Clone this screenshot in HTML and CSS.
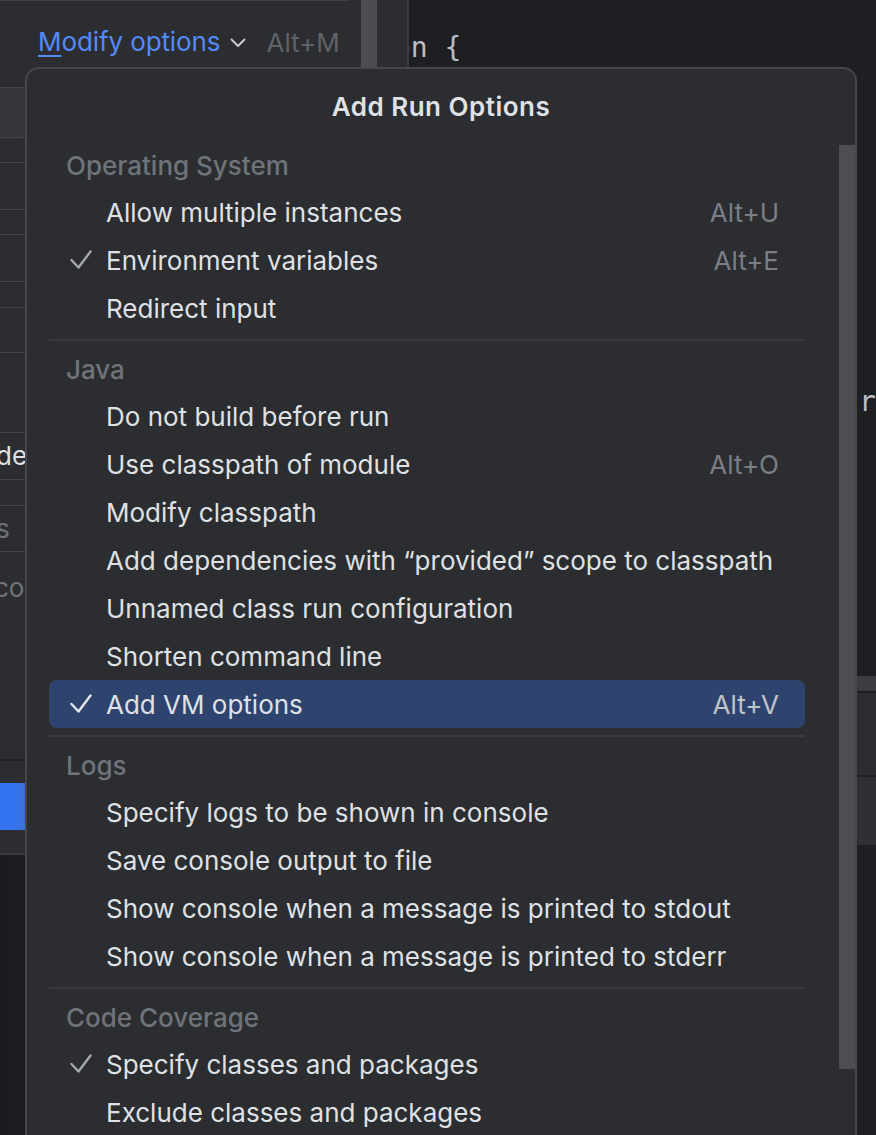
FILE: index.html
```html
<!DOCTYPE html>
<html lang="en">
<head>
<meta charset="utf-8">
<title>Add Run Options</title>
<link rel="stylesheet" href="styles.css">
</head>
<body>
<div class="screen">
  <div class="left-panel">
    <div class="left-content">
      <div class="top-rule"></div>
      <div class="modify-row">
        <span class="link"><span class="mn">M</span>odify options</span>
        <svg class="chev" width="16" height="10" viewBox="0 0 16 10"><polyline points="1.5,1.5 8,8 14.5,1.5" fill="none" stroke="#ced0d6" stroke-width="1.8" stroke-linecap="round" stroke-linejoin="round"/></svg>
        <span class="link-key">Alt+M</span>
      </div>
      <div class="fields">
        <div class="field hi first h49"></div>
        <div class="field h24"></div>
        <div class="field h46"></div>
        <div class="field h24"></div>
        <div class="field h46"></div>
        <div class="field h25"></div>
        <div class="field h44"></div>
        <div class="field h79"></div>
        <div class="field h46 txt">des</div>
        <div class="field h25"></div>
        <div class="field h45 txt muted">s</div>
        <div class="field plain h207"><span class="col">col</span></div>
        <div class="dark-line"></div>
        <div class="pad h22"></div>
        <div class="blue-btn"></div>
        <div class="pad h23 bottom-rule"></div>
        <div class="below"></div>
      </div>
    </div>
    <div class="left-scroll"><div class="left-thumb"></div></div>
  </div>

  <div class="editor">
    <div class="code">
      <div class="code-line first-line">on {</div>
      <div class="code-line second-line">r</div>
    </div>
    <div class="tool-band"></div>
    <div class="tool-line"></div>
    <div class="tool-panel a"></div>
    <div class="tool-line"></div>
    <div class="tool-panel b"></div>
    <div class="editor-rest"></div>
  </div>

  <div class="popup">
    <div class="popup-title">Add Run Options</div>
    <div class="popup-body">
      <div class="list">
        <div class="group">Operating System</div>
        <div class="item"><span class="chk"></span><span class="label">Allow multiple instances</span><span class="key">Alt+U</span></div>
        <div class="item"><span class="chk"><svg width="22" height="20" viewBox="0 0 22 20"><polyline points="1.5,10 8.5,17.5 20.5,1.5" fill="none" stroke="#a4a7ad" stroke-width="2.4" stroke-linecap="round" stroke-linejoin="round"/></svg></span><span class="label">Environment variables</span><span class="key">Alt+E</span></div>
        <div class="item"><span class="chk"></span><span class="label">Redirect input</span></div>
        <div class="sep"></div>
        <div class="group">Java</div>
        <div class="item"><span class="chk"></span><span class="label">Do not build before run</span></div>
        <div class="item"><span class="chk"></span><span class="label">Use classpath of module</span><span class="key">Alt+O</span></div>
        <div class="item"><span class="chk"></span><span class="label">Modify classpath</span></div>
        <div class="item"><span class="chk"></span><span class="label">Add dependencies with “provided” scope to classpath</span></div>
        <div class="item"><span class="chk"></span><span class="label">Unnamed class run configuration</span></div>
        <div class="item"><span class="chk"></span><span class="label">Shorten command line</span></div>
        <div class="item selected"><span class="chk"><svg width="22" height="20" viewBox="0 0 22 20"><polyline points="1.5,10 8.5,17.5 20.5,1.5" fill="none" stroke="#e6e8ec" stroke-width="2.4" stroke-linecap="round" stroke-linejoin="round"/></svg></span><span class="label">Add VM options</span><span class="key">Alt+V</span></div>
        <div class="sep"></div>
        <div class="group">Logs</div>
        <div class="item"><span class="chk"></span><span class="label">Specify logs to be shown in console</span></div>
        <div class="item"><span class="chk"></span><span class="label">Save console output to file</span></div>
        <div class="item"><span class="chk"></span><span class="label">Show console when a message is printed to stdout</span></div>
        <div class="item"><span class="chk"></span><span class="label">Show console when a message is printed to stderr</span></div>
        <div class="sep"></div>
        <div class="group">Code Coverage</div>
        <div class="item"><span class="chk"><svg width="22" height="20" viewBox="0 0 22 20"><polyline points="1.5,10 8.5,17.5 20.5,1.5" fill="none" stroke="#a4a7ad" stroke-width="2.4" stroke-linecap="round" stroke-linejoin="round"/></svg></span><span class="label">Specify classes and packages</span></div>
        <div class="item"><span class="chk"></span><span class="label">Exclude classes and packages</span></div>
      </div>
      <div class="popup-scroll"></div>
    </div>
  </div>
</div>
</body>
</html>
```

FILE: styles.css
```css
* { box-sizing: border-box; }

html, body {
  margin: 0;
  padding: 0;
  background: #1e1f22;
}

body {
  font-family: Inter, "Noto Sans", sans-serif;
  font-size: 26px;
  color: #dfe1e5;
  overflow: hidden;
}

.screen {
  position: relative;
  display: flex;
  width: 876px;
  height: 1135px;
  overflow: hidden;
}

/* ---------- left dialog panel ---------- */
.left-panel {
  display: flex;
  width: 409px;
  flex-shrink: 0;
  background: #2b2d30;
  border-right: 2px solid #393b40;
}

.left-content {
  width: 361px;
  display: flex;
  flex-direction: column;
}

.top-rule {
  width: 350px;
  height: 1px;
  background: #3e4045;
}

.modify-row {
  height: 86px;
  display: flex;
  align-items: center;
  padding: 0 0 4px 38px;
  white-space: nowrap;
}

.link {
  color: #548af7;
  line-height: 36px;
  letter-spacing: -0.1px;
}

.mn {
  text-decoration: underline;
  text-decoration-thickness: 2px;
  text-underline-offset: 4px;
}

.chev {
  margin-left: 10px;
  margin-top: 2px;
  flex-shrink: 0;
}

.link-key {
  margin-left: 20px;
  color: #5f6268;
}

.fields {
  flex: 1;
  display: flex;
  flex-direction: column;
}

.field {
  border-bottom: 1px solid #43454a;
  font-size: 26px;
  line-height: 46px;
  white-space: nowrap;
  overflow: hidden;
}

.field.first { border-top: 1px solid #43454a; }
.field.hi { background: linear-gradient(90deg, #33353a, #393b40); }
.field.plain { border-bottom: none; }

.field.txt { text-indent: -4px; color: #dfe1e5; }
.field.muted { color: #6f737a; }

.col {
  display: block;
  margin-top: 12px;
  margin-left: -6px;
  color: #6f737a;
  line-height: 48px;
}

.h22 { height: 22px; }
.h23 { height: 23px; }
.h24 { height: 25px; }
.h25 { height: 26px; }
.h44 { height: 45px; }
.h45 { height: 46px; }
.h46 { height: 47px; }
.h49 { height: 51px; }
.h79 { height: 80px; }
.h207 { height: 207px; }

.dark-line {
  height: 2px;
  background: #1e1f22;
}

.blue-btn {
  height: 47px;
  background: linear-gradient(90deg, #3574f0 0, #3574f0 14px, #3a6fd8 26px);
}

.bottom-rule {
  border-bottom: 2px solid #393b40;
  height: 25px;
}

.below {
  flex: 1;
  background: linear-gradient(90deg, #1b1c1f, #1f2023);
}

.left-scroll {
  width: 16px;
}

.left-thumb {
  height: 67px;
  background: #4b4d51;
}

/* ---------- editor ---------- */
.editor {
  flex: 1;
  display: flex;
  flex-direction: column;
  background: #1e1f22;
  min-width: 0;
}

.code {
  height: 676px;
  overflow: hidden;
  font-family: "DejaVu Sans Mono", "Liberation Mono", monospace;
  font-size: 28px;
  color: #bcbec4;
}

.code-line {
  line-height: 34px;
  white-space: pre;
}

.first-line {
  margin-top: 31px;
  margin-left: -15px;
}

.second-line {
  margin-top: 320px;
  padding-left: 450px;
}

.tool-band {
  height: 15px;
  background: #3b3d41;
}

.tool-line {
  height: 2px;
  background: #1e1f22;
}

.tool-panel.a {
  height: 82px;
  background: #2b2d30;
}

.tool-panel.b {
  height: 68px;
  background: #2f3034;
}

.editor-rest {
  flex: 1;
  background: #1e1f22;
}

/* ---------- popup ---------- */
.popup {
  position: absolute;
  left: 25px;
  top: 67px;
  width: 832px;
  height: 1100px;
  background: #2b2d30;
  border: 2px solid #45474c;
  border-bottom: none;
  border-radius: 14px 14px 0 0;
  overflow: hidden;
}

.popup-title {
  height: 75px;
  line-height: 75px;
  text-align: center;
  font-weight: 600;
  letter-spacing: 0.5px;
  color: #dfe1e5;
}

.popup-body {
  display: flex;
  align-items: flex-start;
  padding-left: 22px;
}

.list {
  width: 756px;
  flex-shrink: 0;
}

.popup-scroll {
  width: 16px;
  height: 924px;
  margin-left: 34px;
  margin-top: 1px;
  background: #4d4e52;
}

.group {
  height: 44px;
  line-height: 44px;
  padding-left: 17px;
  color: #6f737a;
  font-weight: 500;
}

.sep {
  height: 2px;
  margin: 7px 0;
  background: #393b40;
}

.item {
  height: 48px;
  display: flex;
  align-items: center;
  border-radius: 8px;
  white-space: nowrap;
}

.item.selected {
  background: #2e436e;
}

.chk {
  width: 57px;
  padding-left: 21px;
  display: flex;
  align-items: center;
  flex-shrink: 0;
}

.label {
  flex: 1;
  color: #dfe1e5;
}

.key {
  padding-right: 26px;
  color: #7b7e85;
}

.item.selected .key {
  color: #bfc3ca;
}
```
